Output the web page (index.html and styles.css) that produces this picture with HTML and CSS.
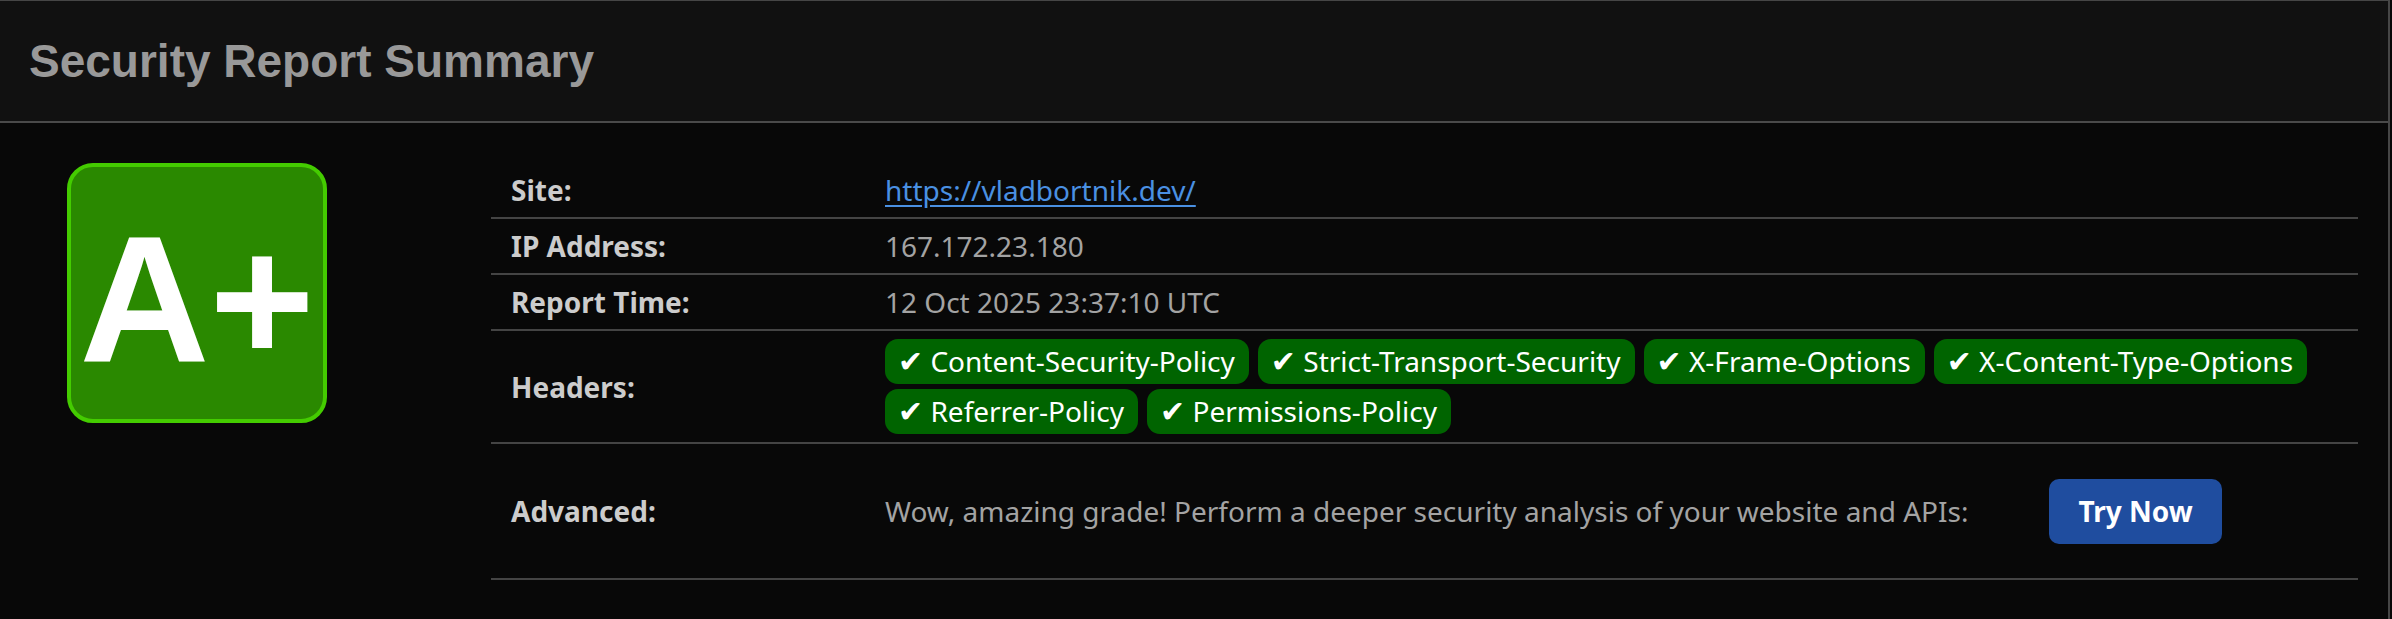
FILE: index.html
```html
<!DOCTYPE html>
<html lang="en">
<head>
<meta charset="utf-8">
<title>Security Report Summary</title>
<link rel="stylesheet" href="styles.css">
</head>
<body>
<div class="frame">
  <header class="report-header">
    <h1 class="report-title">Security Report Summary</h1>
  </header>
  <section class="report-body">
    <div class="grade-col">
      <div class="grade">A+</div>
    </div>
    <div class="details">
      <div class="row">
        <div class="label">Site:</div>
        <div class="value"><a class="site-link" href="#">https://vladbortnik.dev/</a></div>
      </div>
      <div class="row">
        <div class="label">IP Address:</div>
        <div class="value">167.172.23.180</div>
      </div>
      <div class="row">
        <div class="label">Report Time:</div>
        <div class="value">12 Oct 2025 23:37:10 UTC</div>
      </div>
      <div class="row">
        <div class="label">Headers:</div>
        <div class="value chips">
          <span class="chip"><span class="check">&#10004;</span> Content-Security-Policy</span>
          <span class="chip"><span class="check">&#10004;</span> Strict-Transport-Security</span>
          <span class="chip"><span class="check">&#10004;</span> X-Frame-Options</span>
          <span class="chip"><span class="check">&#10004;</span> X-Content-Type-Options</span>
          <span class="chip"><span class="check">&#10004;</span> Referrer-Policy</span>
          <span class="chip"><span class="check">&#10004;</span> Permissions-Policy</span>
        </div>
      </div>
      <div class="row row-advanced">
        <div class="label">Advanced:</div>
        <div class="value advanced">
          <span class="advanced-text">Wow, amazing grade! Perform a deeper security analysis of your website and APIs:</span>
          <a class="try-btn" href="#">Try Now</a>
        </div>
      </div>
    </div>
  </section>
</div>
</body>
</html>
```
FILE: styles.css
```css
* { box-sizing: border-box; }
html, body { margin: 0; padding: 0; background: #080808; }
body { font-family: "Noto Sans", "Open Sans", sans-serif; }

.frame {
  width: 2390px;
  min-height: 619px;
  border-top: 1px solid #464646;
  border-right: 2px solid #464646;
  background: #080808;
}

.report-header {
  height: 122px;
  background: #111111;
  border-bottom: 2px solid #4a4a4a;
  display: flex;
  align-items: center;
  padding-left: 29px;
}
.report-title {
  margin: 0;
  font-family: "Liberation Sans", Arial, sans-serif;
  font-weight: 700;
  font-size: 46px;
  color: #999999;
  line-height: 1;
}

.report-body {
  display: grid;
  grid-template-columns: 424px 1fr;
  padding: 40px 30px 0 67px;
}

.grade {
  width: 260px;
  height: 260px;
  border: 4px solid #44cc00;
  border-radius: 26px;
  background: #2a8900;
  color: #ffffff;
  font-family: "Liberation Sans", Arial, sans-serif;
  font-weight: 700;
  font-size: 180px;
  line-height: 1;
  display: flex;
  align-items: center;
  justify-content: center;
  padding-top: 14px;
}

.details { display: flex; flex-direction: column; }

.row {
  display: grid;
  grid-template-columns: 394px 1fr;
  align-items: center;
  border-bottom: 2px solid #444444;
  font-size: 28px;
  line-height: 38px;
}
.label {
  padding: 8px 0 8px 20px;
  font-weight: 700;
  color: #cccccc;
}
.value {
  padding: 8px 0;
  color: #a3a3a3;
}
.site-link {
  color: #4a90e2;
  text-decoration: underline;
  text-underline-offset: 4px;
}

.chips {
  display: flex;
  flex-wrap: wrap;
  gap: 5px 9px;
}
.chip {
  display: block;
  height: 45px;
  background: #006400;
  color: #ffffff;
  font-size: 28px;
  line-height: 37px;
  padding: 4px 14px 4px 13px;
  border-radius: 13px;
  white-space: nowrap;
}
.check {
  font-family: "DejaVu Sans", sans-serif;
  font-size: 30px;
  line-height: 0;
}

.row-advanced { min-height: 136px; }
.advanced {
  display: flex;
  align-items: center;
}
.try-btn {
  margin-left: 81px;
  background: #1f4d9f;
  color: #ffffff;
  font-weight: 700;
  text-decoration: none;
  font-size: 28px;
  line-height: 38px;
  padding: 13px 29px 14px;
  border-radius: 10px;
}
```
